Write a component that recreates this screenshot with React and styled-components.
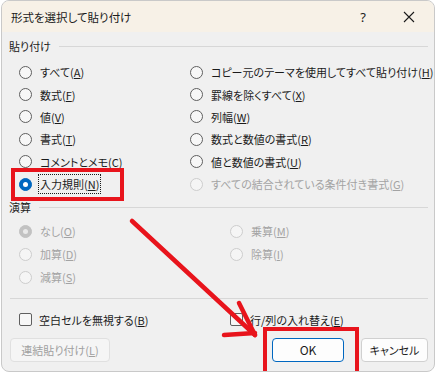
import React from "react";
import styled, { createGlobalStyle } from "styled-components";

const GlobalStyle = createGlobalStyle`
  body {
    margin: 0;
    background: #ffffff;
    font-family: "Noto Sans CJK JP", "Noto Sans", sans-serif;
    font-size: 11px;
    color: #1b1b1b;
  }
`;

const pasteLeft = [
  { label: "すべて", key: "A" },
  { label: "数式", key: "F" },
  { label: "値", key: "V" },
  { label: "書式", key: "T" },
  { label: "コメントとメモ", key: "C" },
  { label: "入力規則", key: "N", checked: true, focus: true },
];

const pasteRight = [
  { label: "コピー元のテーマを使用してすべて貼り付け", key: "H" },
  { label: "罫線を除くすべて", key: "X" },
  { label: "列幅", key: "W" },
  { label: "数式と数値の書式", key: "R" },
  { label: "値と数値の書式", key: "U" },
  { label: "すべての結合されている条件付き書式", key: "G", disabled: true },
];

const opLeft = [
  { label: "なし", key: "O", checked: true, disabled: true },
  { label: "加算", key: "D", disabled: true },
  { label: "減算", key: "S", disabled: true },
];

const opRight = [
  { label: "乗算", key: "M", disabled: true },
  { label: "除算", key: "I", disabled: true },
];

const RadioItem = ({ item, height }) => (
  <Row $height={height} $disabled={item.disabled}>
    <Radio $checked={item.checked} $disabled={item.disabled} />
    <Label $focus={item.focus}>
      {item.label}(<u>{item.key}</u>)
    </Label>
  </Row>
);

const App = () => {
  return (
    <>
      <GlobalStyle />
      <Dialog>
        <TitleBar>
          <Title>形式を選択して貼り付け</Title>
          <HelpBtn>?</HelpBtn>
          <CloseBtn>
            <svg width="12" height="12" viewBox="0 0 12 12">
              <path d="M1 1 L11 11 M11 1 L1 11" stroke="#1b1b1b" strokeWidth="1.1" />
            </svg>
          </CloseBtn>
        </TitleBar>
        <Body>
          <SectionHead $top={6}>
            <span>貼り付け</span>
            <Rule />
          </SectionHead>
          <Options $top={7} $leftWidth={171}>
            <Column>
              {pasteLeft.map((it) => (
                <RadioItem key={it.key} item={it} height={22.4} />
              ))}
            </Column>
            <Column>
              {pasteRight.map((it) => (
                <RadioItem key={it.key} item={it} height={22.4} />
              ))}
            </Column>
          </Options>
          <SectionHead $top={4}>
            <span>演算</span>
            <Rule />
          </SectionHead>
          <Options $top={4.5} $leftWidth={211}>
            <Column>
              {opLeft.map((it) => (
                <RadioItem key={it.key} item={it} height={23} />
              ))}
            </Column>
            <Column>
              {opRight.map((it) => (
                <RadioItem key={it.key} item={it} height={23} />
              ))}
            </Column>
          </Options>
          <Separator />
          <CheckRow>
            <CheckItem $width={211}>
              <Check />
              <span>
                空白セルを無視する(<u>B</u>)
              </span>
            </CheckItem>
            <CheckItem>
              <Check />
              <span>
                行/列の入れ替え(<u>E</u>)
              </span>
            </CheckItem>
          </CheckRow>
          <ButtonRow>
            <Button $width={100} $disabled>
              連結貼り付け(<u>L</u>)
            </Button>
            <Spacer />
            <Button $width={72} $primary>
              OK
            </Button>
            <Button $width={67}>キャンセル</Button>
          </ButtonRow>
        </Body>

        <Highlight $left={9} $top={167} $width={113} $height={33} />
        <Highlight $left={261} $top={326} $width={96} $height={48} />
        <Arrow width="436" height="373" viewBox="0 0 436 373">
          <g stroke="#e8141c" strokeWidth="4.5" strokeLinecap="round" fill="none">
            <path d="M132 221 L255 335" />
            <path d="M239 303 L255 335" />
            <path d="M224 335 L255 333" />
          </g>
        </Arrow>
      </Dialog>
    </>
  );
};

export default App;

const Dialog = styled.div`
  position: relative;
  box-sizing: border-box;
  width: 434px;
  height: 372px;
  margin-left: 1px;
  border: 1px solid #c9c9c9;
  border-radius: 8px;
  background: #f0f0f0;
  overflow: hidden;
  display: flex;
  flex-direction: column;
`;

const TitleBar = styled.div`
  height: 31px;
  flex: none;
  display: flex;
  align-items: center;
  background: #f7f1e7;
  padding-left: 9px;
`;

const Title = styled.div`
  flex: 1;
  font-size: 11.5px;
  font-feature-settings: "palt";
`;

const HelpBtn = styled.div`
  width: 46px;
  text-align: center;
  font-family: "Noto Sans", sans-serif;
  font-size: 13px;
`;

const CloseBtn = styled.div`
  width: 46px;
  display: flex;
  justify-content: center;
  margin-right: 2px;
`;

const Body = styled.div`
  flex: 1;
  display: flex;
  flex-direction: column;
  padding: 0 6px 0 7px;
`;

const SectionHead = styled.div`
  display: flex;
  align-items: center;
  gap: 8px;
  height: 16px;
  margin-top: ${(p) => p.$top}px;
  font-feature-settings: "palt";
`;

const Rule = styled.div`
  flex: 1;
  height: 1px;
  background: #d7d7d7;
`;

const Options = styled.div`
  display: grid;
  grid-template-columns: ${(p) => p.$leftWidth}px 1fr;
  margin-top: ${(p) => p.$top}px;
  padding-left: 10px;
`;

const Column = styled.div`
  display: flex;
  flex-direction: column;
`;

const Row = styled.div`
  display: flex;
  align-items: center;
  gap: 7px;
  height: ${(p) => p.$height}px;
  color: ${(p) => (p.$disabled ? "#a3a3a3" : "#1b1b1b")};
  white-space: nowrap;
  font-feature-settings: "palt";
`;

const Radio = styled.span`
  position: relative;
  box-sizing: border-box;
  width: 13px;
  height: 13px;
  flex: none;
  border-radius: 50%;
  border: 1px solid
    ${(p) => (p.$checked ? (p.$disabled ? "#c2c2c2" : "#0067c0") : p.$disabled ? "#cdcdcd" : "#5f5f5f")};
  background: ${(p) => (p.$checked ? (p.$disabled ? "#c2c2c2" : "#0067c0") : p.$disabled ? "#f5f5f5" : "#f7f7f7")};

  &::after {
    content: "";
    display: ${(p) => (p.$checked ? "block" : "none")};
    position: absolute;
    left: 50%;
    top: 50%;
    width: 5px;
    height: 5px;
    margin: -2.5px 0 0 -2.5px;
    border-radius: 50%;
    background: ${(p) => (p.$disabled ? "#e9e9e9" : "#ffffff")};
  }
`;

const Label = styled.span`
  padding: 1px 1px;
  outline: ${(p) => (p.$focus ? "1px dotted #1b1b1b" : "none")};
  outline-offset: 0;
`;

const Separator = styled.div`
  height: 1px;
  background: #d7d7d7;
  margin: 9px 0 0 1px;
`;

const CheckRow = styled.div`
  display: flex;
  align-items: center;
  height: 20px;
  margin-top: 11px;
  padding-left: 10px;
  font-feature-settings: "palt";
`;

const CheckItem = styled.div`
  display: flex;
  align-items: center;
  gap: 7px;
  width: ${(p) => (p.$width ? `${p.$width}px` : "auto")};
`;

const Check = styled.span`
  box-sizing: border-box;
  width: 13px;
  height: 13px;
  border: 1px solid #5f5f5f;
  border-radius: 2px;
  background: #f7f7f7;
`;

const ButtonRow = styled.div`
  display: flex;
  align-items: center;
  gap: 17px;
  margin-top: 8px;
  padding-left: 1px;
`;

const Spacer = styled.div`
  flex: 1;
`;

const Button = styled.div`
  box-sizing: border-box;
  width: ${(p) => p.$width}px;
  height: 24px;
  display: flex;
  align-items: center;
  justify-content: center;
  border-radius: 4px;
  background: ${(p) => (p.$disabled ? "#f5f5f5" : "#fdfdfd")};
  border: 1px solid ${(p) => (p.$primary ? "#0067c0" : p.$disabled ? "#e0e0e0" : "#d0d0d0")};
  color: ${(p) => (p.$disabled ? "#a0a0a0" : "#1b1b1b")};
  font-feature-settings: "palt";
  font-size: ${(p) => (p.$primary ? "12px" : "11px")};
`;

const Highlight = styled.div`
  position: absolute;
  box-sizing: border-box;
  left: ${(p) => p.$left}px;
  top: ${(p) => p.$top}px;
  width: ${(p) => p.$width}px;
  height: ${(p) => p.$height}px;
  border: 4px solid #e8141c;
  pointer-events: none;
`;

const Arrow = styled.svg`
  position: absolute;
  left: -2px;
  top: -1px;
  pointer-events: none;
`;
